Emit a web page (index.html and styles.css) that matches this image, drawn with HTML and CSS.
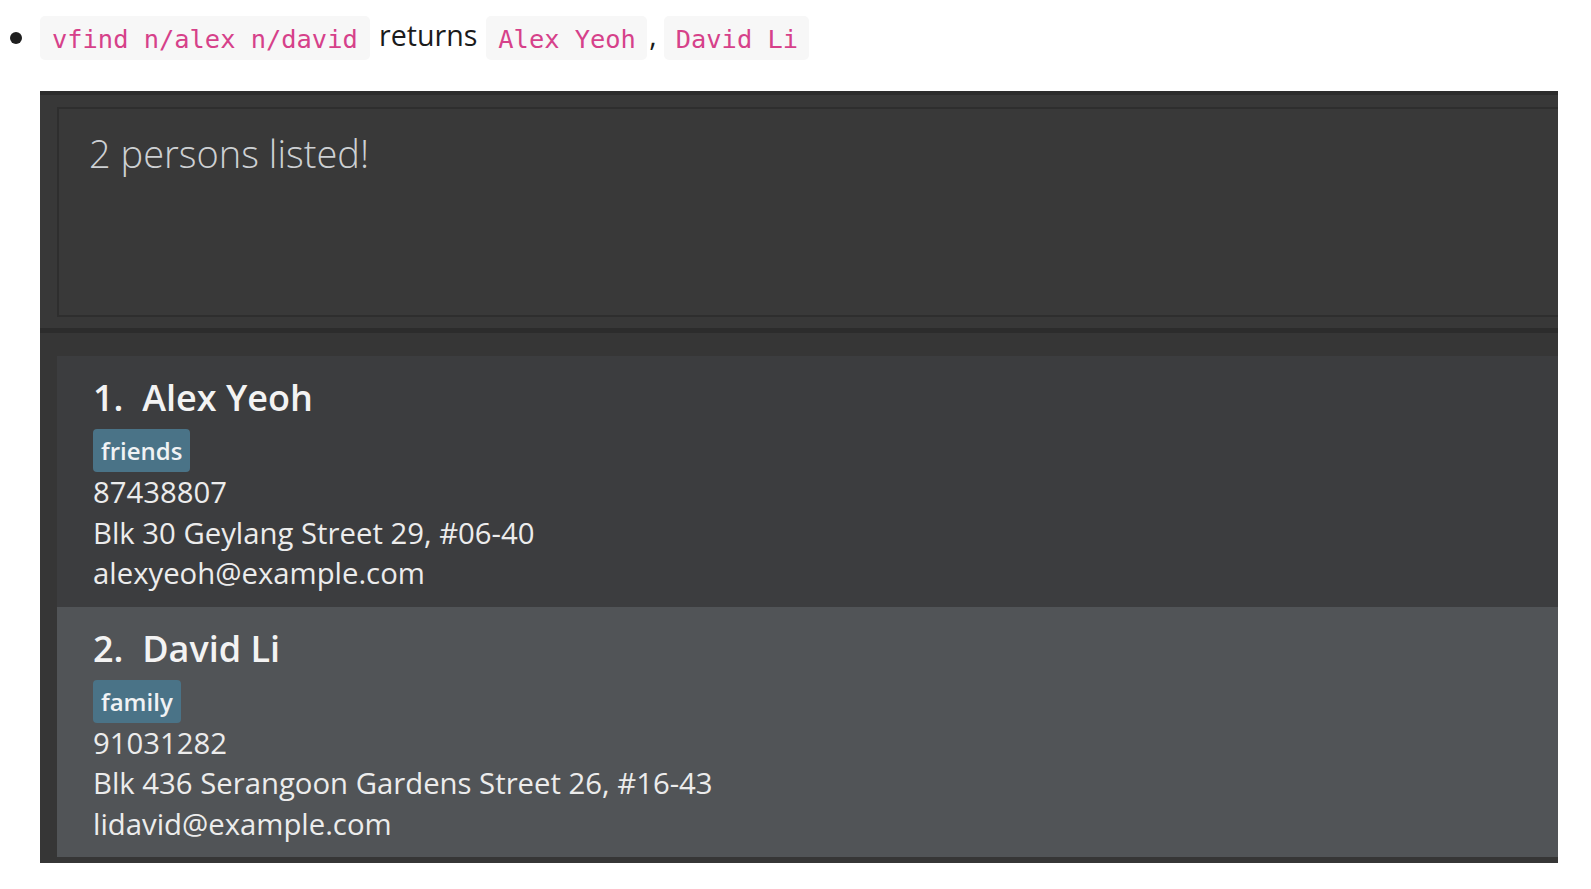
FILE: index.html
```html
<!DOCTYPE html>
<html lang="en">
<head>
<meta charset="utf-8">
<title>vfind example</title>
<link rel="stylesheet" href="styles.css">
</head>
<body>
<div class="item">
  <span class="bullet"></span>
  <div class="line">
    <code class="code c1">vfind n/alex n/david</code>
    <span class="word w-returns">returns</span>
    <code class="code c2">Alex Yeoh</code>
    <span class="word w-comma">,</span>
    <code class="code c3">David Li</code>
  </div>
</div>
<div class="app">
  <div class="result"><div class="result-text">2 persons listed!</div></div>
  <div class="divider"></div>
  <div class="list">
    <div class="card">
      <div class="name">1.&nbsp;&nbsp;Alex Yeoh</div>
      <div class="tags"><span class="tag">friends</span></div>
      <div class="detail">87438807</div>
      <div class="detail">Blk 30 Geylang Street 29, #06-40</div>
      <div class="detail">alexyeoh@example.com</div>
    </div>
    <div class="card alt">
      <div class="name">2.&nbsp;&nbsp;David Li</div>
      <div class="tags"><span class="tag">family</span></div>
      <div class="detail">91031282</div>
      <div class="detail">Blk 436 Serangoon Gardens Street 26, #16-43</div>
      <div class="detail">lidavid@example.com</div>
    </div>
  </div>
</div>
</body>
</html>
```
FILE: styles.css
```css
html, body {
  margin: 0;
  padding: 0;
  background: #ffffff;
}
body {
  font-family: "Open Sans", "Noto Sans", sans-serif;
  color: #1b1b1b;
  width: 1591px;
  height: 889px;
  overflow: hidden;
}
.item {
  display: flex;
  align-items: center;
  padding-top: 16px;
  height: 44px;
}
.bullet {
  width: 12px;
  height: 12px;
  border-radius: 50%;
  background: #1f1f1f;
  margin-left: 10px;
  margin-right: 18px;
  flex: none;
}
.line {
  display: flex;
  align-items: center;
  height: 44px;
}
.code {
  display: inline-block;
  box-sizing: border-box;
  height: 44px;
  line-height: 46px;
  padding: 0 12px;
  background: #f7f7f7;
  border-radius: 5px;
  font-family: "DejaVu Sans Mono", "Liberation Mono", monospace;
  font-size: 25.4px;
  color: #d6418a;
  white-space: pre;
}
.c1 { width: 330px; }
.c2 { width: 161px; }
.c3 { width: 145px; }
.word {
  font-size: 28.6px;
  line-height: 44px;
  color: #1b1b1b;
  position: relative;
  top: -3px;
}
.w-returns { margin: 0 9px 0 9px; }
.w-comma { margin: 0 7px 0 2px; }

.app {
  margin: 31px 0 0 40px;
  width: 1518px;
  height: 772px;
  box-sizing: border-box;
  background: #383838;
  border-top: 4px solid #2c2c2c;
  overflow: hidden;
  padding-top: 12px;
}
.result {
  margin-left: 17px;
  margin-right: -20px;
  height: 210px;
  box-sizing: border-box;
  border: 2px solid #2e2e2e;
  background: #393939;
  padding: 20px 0 0 30px;
}
.result-text {
  font-family: "Open Sans", "Noto Sans", sans-serif;
  font-weight: 300;
  font-size: 38px;
  line-height: 48px;
  color: #cdd0d3;
}
.divider {
  margin-top: 11px;
  height: 5px;
  background: #2c2c2c;
}
.list {
  background: #363636;
  padding: 23px 0 6px 17px;
}
.card {
  margin-right: -20px;
  background: #3c3d3f;
  padding: 19px 0 13px 36px;
  height: 250.5px;
  box-sizing: border-box;
}
.card.alt {
  background: #515457;
  height: 250px;
}
.name {
  font-weight: 600;
  font-size: 36px;
  line-height: 46px;
  color: #f3f3f3;
  white-space: pre;
}
.tags {
  display: flex;
  margin-top: 8px;
}
.tag {
  display: inline-block;
  height: 43px;
  line-height: 43px;
  padding: 0 8px;
  background: #4a7387;
  border-radius: 4px;
  color: #f0f2f4;
  font-size: 24px;
  font-weight: 600;
}
.detail {
  font-size: 29.3px;
  line-height: 40.5px;
  color: #ececec;
  white-space: nowrap;
}
```
